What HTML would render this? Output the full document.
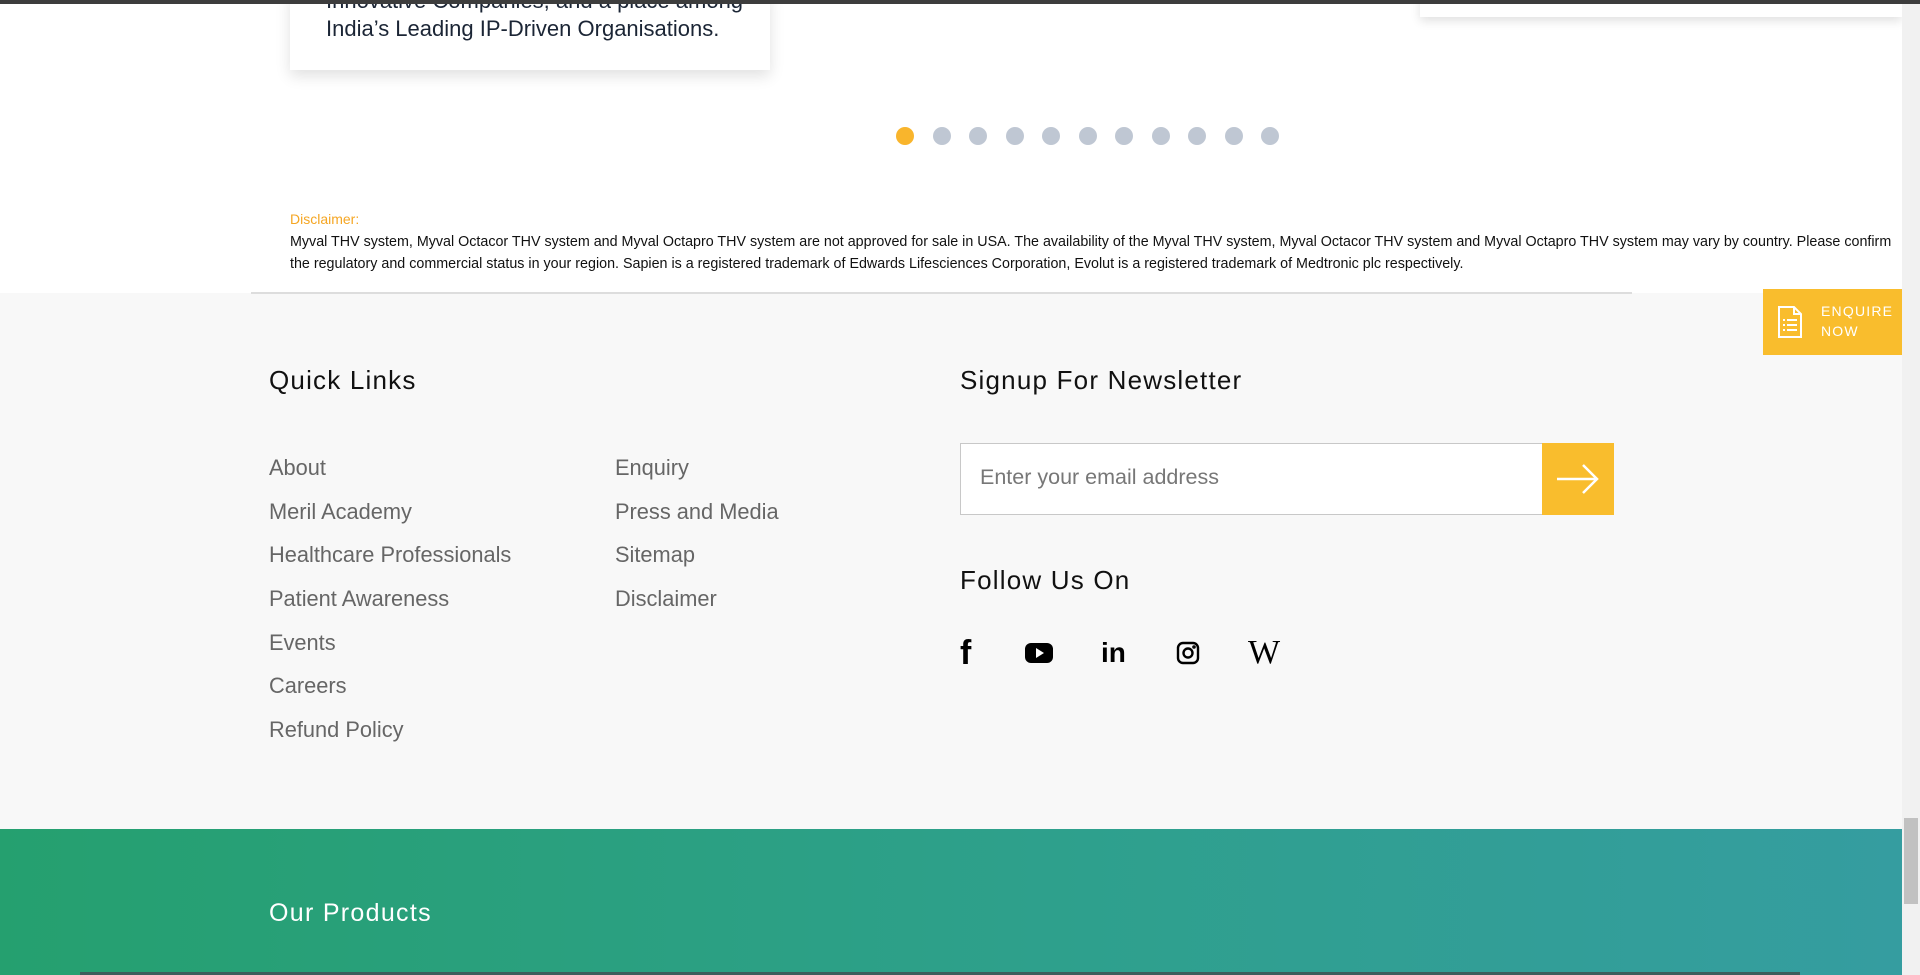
<!DOCTYPE html>
<html><head><meta charset="utf-8"><style>
*{margin:0;padding:0;box-sizing:border-box}
body{width:1920px;height:975px;overflow:hidden;position:relative;background:#fff;font-family:"Liberation Sans",sans-serif}
.a{position:absolute}
.h{font-size:26px;color:#111;letter-spacing:1.2px;font-weight:500}
.lk{font-size:21.8px;color:#666;position:absolute}
</style></head><body>
<div class="a" style="left:290px;top:-10px;width:480px;height:80px;background:#fff;box-shadow:0 6px 14px rgba(0,0,0,.12)"></div>
<div class="a" style="left:326px;top:-13px;font-size:22px;color:#1b2535;line-height:28px">Innovative Companies, and a place among<br>India’s Leading IP-Driven Organisations.</div>
<div class="a" style="left:1420px;top:-10px;width:482px;height:27px;background:#fff;box-shadow:0 4px 10px rgba(0,0,0,.12)"></div>
<div class="a" style="left:896px;top:127px;display:flex;gap:18.5px">
<span style="width:18px;height:18px;border-radius:50%;background:#f9b52c"></span>
<span style="width:18px;height:18px;border-radius:50%;background:#bfc7d3"></span><span style="width:18px;height:18px;border-radius:50%;background:#bfc7d3"></span><span style="width:18px;height:18px;border-radius:50%;background:#bfc7d3"></span><span style="width:18px;height:18px;border-radius:50%;background:#bfc7d3"></span><span style="width:18px;height:18px;border-radius:50%;background:#bfc7d3"></span><span style="width:18px;height:18px;border-radius:50%;background:#bfc7d3"></span><span style="width:18px;height:18px;border-radius:50%;background:#bfc7d3"></span><span style="width:18px;height:18px;border-radius:50%;background:#bfc7d3"></span><span style="width:18px;height:18px;border-radius:50%;background:#bfc7d3"></span><span style="width:18px;height:18px;border-radius:50%;background:#bfc7d3"></span>
</div>
<div class="a" style="left:290px;top:211px;font-size:14px;color:#f5a623">Disclaimer:</div>
<div class="a" style="left:290px;top:231px;width:1612px;font-size:14.3px;line-height:22px;color:#111">Myval THV system, Myval Octacor THV system and Myval Octapro THV system are not approved for sale in USA. The availability of the Myval THV system, Myval Octacor THV system and Myval Octapro THV system may vary by country. Please confirm the regulatory and commercial status in your region. Sapien is a registered trademark of Edwards Lifesciences Corporation, Evolut is a registered trademark of Medtronic plc respectively.</div>
<div class="a" style="left:0;top:293px;width:1902px;height:537px;background:#f8f8f8"></div>
<div class="a" style="left:251px;top:292px;width:1381px;height:2px;background:#ddd"></div>
<div class="a" style="left:1763px;top:289px;width:139px;height:66px;background:#f9bd2d"></div>
<svg class="a" style="left:1777px;top:305px" width="26" height="34" viewBox="0 0 26 34" fill="none" stroke="#fff" stroke-width="2"><path d="M2 2h15l7 7v23H2z M17 2v7h7"/><path d="M6 15h2M10 15h10M6 20h2M10 20h10M6 25h2M10 25h10"/></svg>
<div class="a" style="left:1821px;top:301px;font-size:14px;line-height:20px;color:#fff;letter-spacing:1.2px">ENQUIRE<br>NOW</div>
<div class="a h" style="left:269px;top:365px">Quick Links</div>
<div class="a h" style="left:960px;top:365px">Signup For Newsletter</div>
<div class="lk" style="left:269px;top:455px">About</div>
<div class="lk" style="left:269px;top:499px">Meril Academy</div>
<div class="lk" style="left:269px;top:542px">Healthcare Professionals</div>
<div class="lk" style="left:269px;top:586px">Patient Awareness</div>
<div class="lk" style="left:269px;top:630px">Events</div>
<div class="lk" style="left:269px;top:673px">Careers</div>
<div class="lk" style="left:269px;top:717px">Refund Policy</div>
<div class="lk" style="left:615px;top:455px">Enquiry</div>
<div class="lk" style="left:615px;top:499px">Press and Media</div>
<div class="lk" style="left:615px;top:542px">Sitemap</div>
<div class="lk" style="left:615px;top:586px">Disclaimer</div>
<div class="a" style="left:960px;top:443px;width:654px;height:72px;background:#fff;border:1px solid #c8c8c8"></div>
<div class="a" style="left:980px;top:465px;font-size:21.5px;color:#777">Enter your email address</div>
<div class="a" style="left:1542px;top:443px;width:72px;height:72px;background:#f9bd2d"></div>
<svg class="a" style="left:1555px;top:462px" width="46" height="34" viewBox="0 0 46 34" fill="none" stroke="#fff" stroke-width="2.5"><path d="M2 17h40M28 3l14 14-14 14"/></svg>
<div class="a h" style="left:960px;top:565px">Follow Us On</div>
<div class="a" style="left:960px;top:634px;font-size:34px;font-weight:bold;color:#000">f</div>
<svg class="a" style="left:1025px;top:642px" width="28" height="22" viewBox="0 0 28 22"><rect x="0" y="1" width="28" height="20" rx="6" fill="#000"/><path d="M11 6v10l8-5z" fill="#fff"/></svg>
<div class="a" style="left:1101px;top:637px;font-size:28px;font-weight:bold;color:#000">in</div>
<svg class="a" style="left:1176px;top:641px" width="24" height="24" viewBox="0 0 24 24" fill="none" stroke="#000" stroke-width="2.4"><rect x="2" y="2" width="20" height="20" rx="5"/><circle cx="12" cy="12" r="4.5"/><circle cx="18" cy="6" r=".6" fill="#000"/></svg>
<div class="a" style="left:1248px;top:634px;font-family:'Liberation Serif',serif;font-size:34px;color:#000">W</div>
<div class="a" style="left:0;top:829px;width:1902px;height:146px;background:linear-gradient(90deg,#25a06f,#2ea08c 55%,#359da0)"></div>
<div class="a" style="left:269px;top:899px;font-size:25px;color:#fff;letter-spacing:1.3px">Our Products</div>
<div class="a" style="left:80px;top:972px;width:1720px;height:3px;background:#3d5d5c"></div>
<div class="a" style="left:1902px;top:0;width:18px;height:975px;background:#f1f1f1"></div>
<div class="a" style="left:1904px;top:818px;width:14px;height:86px;background:#c1c1c1"></div>
<div class="a" style="left:0;top:0;width:1920px;height:4px;background:#3d3d3d"></div>
</body></html>
